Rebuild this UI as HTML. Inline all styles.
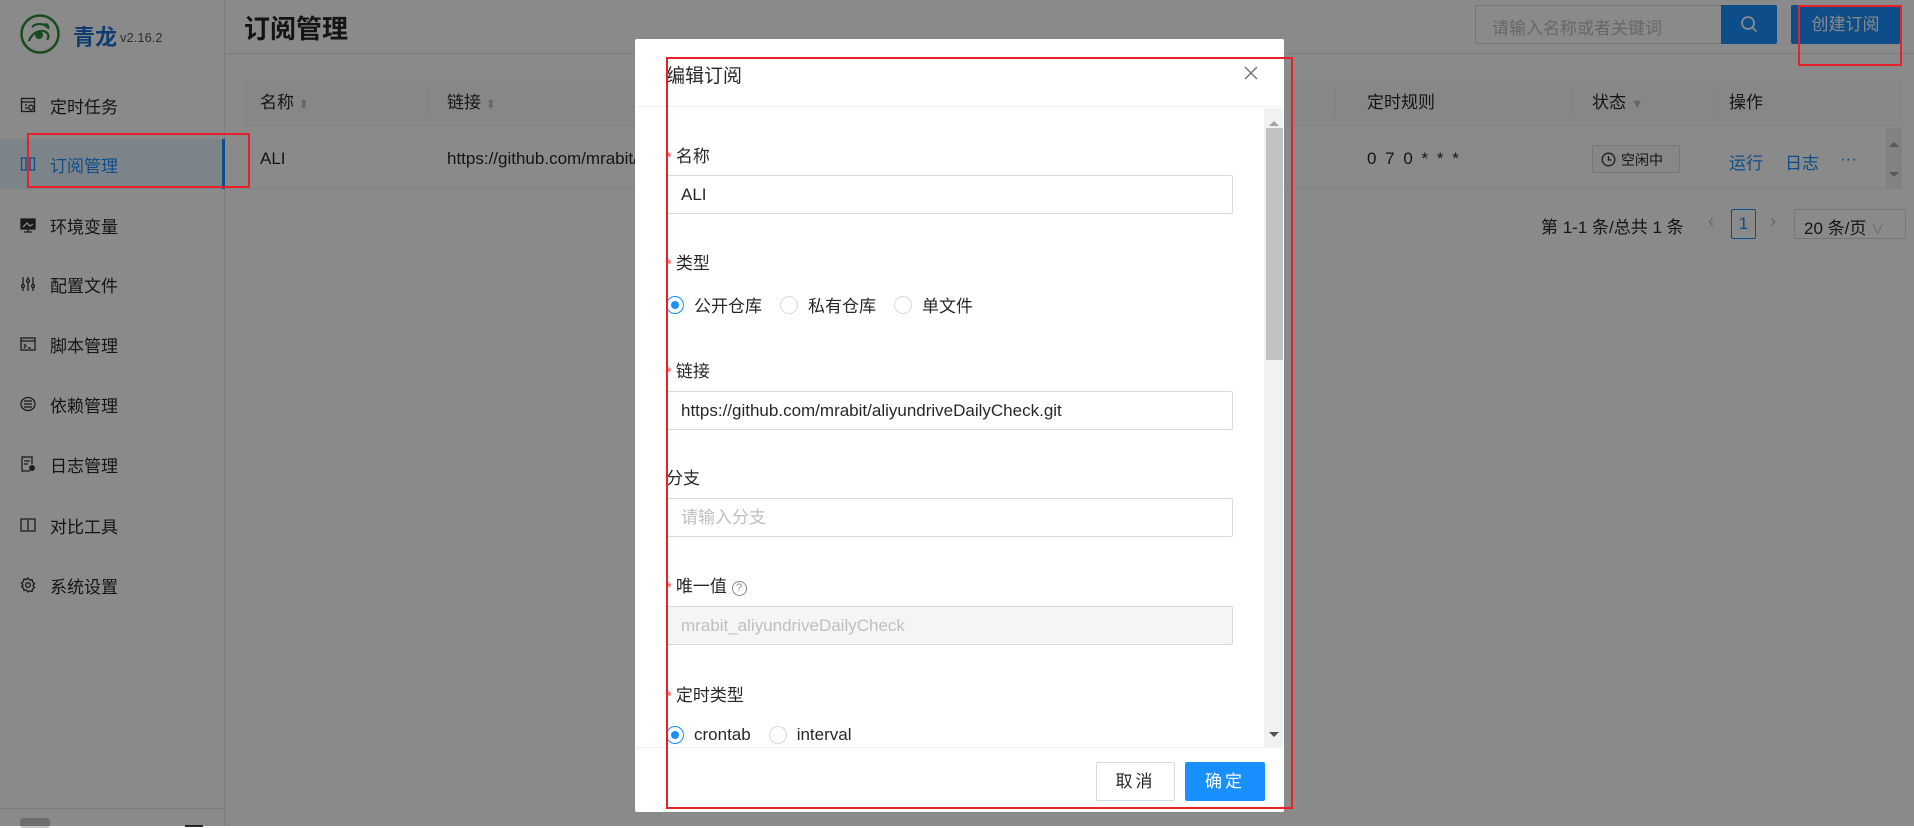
<!DOCTYPE html>
<html><head><meta charset="utf-8"><style>
*{box-sizing:border-box;margin:0;padding:0}
body{width:1914px;height:826px;overflow:hidden;position:relative;background:#fff;font-family:"Liberation Sans","Noto Sans CJK SC",sans-serif;color:rgba(0,0,0,.85)}
.abs{position:absolute}
.side{left:0;top:0;width:225px;height:826px;background:#fff;border-right:1px solid #e8e8e8}
.item{position:absolute;left:0;width:225px;height:50px;display:flex;align-items:center;padding-left:20px;font-size:17px;color:rgba(0,0,0,.85)}
.item svg{width:16px;height:16px;margin-right:14px}
.sel{background:#e6f4ff;color:#1890ff;border-right:3px solid #1890ff}
.th{font-size:17px;top:88px}
.lbl{position:absolute;left:666px;font-size:17px;color:rgba(0,0,0,.85)}
.lbl b{color:#ff4d4f;font-weight:normal;margin-right:4px;font-size:15px}
.inp{position:absolute;left:666px;width:567px;height:39px;border:1px solid #d9d9d9;border-radius:2px;font-size:17px;padding-left:14px;line-height:37px}
.radio{display:inline-block;width:18px;height:18px;border:1px solid #d9d9d9;border-radius:50%;vertical-align:middle;margin-right:10px;position:relative}
.radio.on{border-color:#1890ff}
.radio.on:after{content:"";position:absolute;left:4px;top:4px;width:8px;height:8px;border-radius:50%;background:#1890ff}
.rg{position:absolute;left:666px;font-size:17px}
.rg span.t{margin-right:18px;vertical-align:middle}
.red{position:absolute;border:2px solid #e8202a}
</style></head><body>
<div class="abs side">
 <svg class="abs" style="left:20px;top:14px" width="40" height="40" viewBox="0 0 40 40"><circle cx="20" cy="20" r="18.5" fill="#fff" stroke="#2e8b3a" stroke-width="2.5"/><path d="M9 27c2-6 7-10 13-10s8 5 5 9M12 13c4-4 11-4 15 0M24 11c3-2 5 1 4 4" stroke="#2e8b3a" stroke-width="2.2" fill="none"/><circle cx="19" cy="21" r="4" fill="#2e8b3a"/></svg>
 <div class="abs" style="left:73px;top:20px;font-size:22px;font-weight:bold;color:#1b6fd0">青龙</div>
 <div class="abs" style="left:120px;top:30px;font-size:13px;color:#555">v2.16.2</div>
 <div class="item" style="top:80px"><svg viewBox="0 0 16 16" fill="none" stroke="#333" stroke-width="1.3"><rect x="1.5" y="1.5" width="13" height="13"/><path d="M1.5 5h13M5 8h2M5 11h3"/><circle cx="11" cy="10.5" r="2.3"/></svg>定时任务</div>
 <div class="item sel" style="top:139px"><svg viewBox="0 0 16 16" fill="none" stroke="#1890ff" stroke-width="1.3"><rect x="1.5" y="2" width="13" height="12"/><path d="M6 2v12M10 2v12"/></svg>订阅管理</div>
 <div class="item" style="top:200px"><svg viewBox="0 0 16 16" fill="none" stroke="#333" stroke-width="1.3"><rect x="1" y="2" width="14" height="10" fill="#333"/><path d="M4 15h8M8 12v3"/><path d="M3 10l4-4 3 3 3-2" stroke="#fff"/></svg>环境变量</div>
 <div class="item" style="top:259px"><svg viewBox="0 0 16 16" fill="none" stroke="#333" stroke-width="1.3"><path d="M3 1v14M8 1v14M13 1v14"/><circle cx="3" cy="10" r="1.5" fill="#fff"/><circle cx="8" cy="5" r="1.5" fill="#fff"/><circle cx="13" cy="10" r="1.5" fill="#fff"/></svg>配置文件</div>
 <div class="item" style="top:319px"><svg viewBox="0 0 16 16" fill="none" stroke="#333" stroke-width="1.3"><rect x="1" y="2" width="14" height="12"/><path d="M1 5h14M4 8l2 2-2 2M8 12h3"/></svg>脚本管理</div>
 <div class="item" style="top:379px"><svg viewBox="0 0 16 16" fill="none" stroke="#333" stroke-width="1.3"><ellipse cx="8" cy="8" rx="7" ry="6.5"/><path d="M4 5h8M4 8h8M4 11h8"/></svg>依赖管理</div>
 <div class="item" style="top:439px"><svg viewBox="0 0 16 16" fill="none" stroke="#333" stroke-width="1.3"><path d="M10 15H2V1h10v7"/><path d="M4 5h6M4 8h4"/><circle cx="12" cy="12" r="2.3" fill="#333"/></svg>日志管理</div>
 <div class="item" style="top:500px"><svg viewBox="0 0 16 16" fill="none" stroke="#333" stroke-width="1.3"><path d="M7 2H1v12h6M9 2h6v12H9"/><path d="M8 1v14"/></svg>对比工具</div>
 <div class="item" style="top:560px"><svg viewBox="0 0 16 16" fill="none" stroke="#333" stroke-width="1.3"><path d="M8 1l1.5 2 2.5-.5.5 2.5 2 1.5-1.5 2 1.5 2-2 1.5-.5 2.5-2.5-.5L8 15l-1.5-2-2.5.5-.5-2.5-2-1.5L3 8 1.5 6l2-1.5.5-2.5 2.5.5z"/><circle cx="8" cy="8" r="2.3"/></svg>系统设置</div>
 <div class="abs" style="left:0;top:808px;width:225px;border-top:1px solid #e8e8e8"></div>
 <div class="abs" style="left:20px;top:818px;width:30px;height:10px;background:#ccc;border-radius:3px"></div>
 <div class="abs" style="left:185px;top:825px;width:18px;height:2px;background:#333"></div>
</div>
<div class="abs" style="left:225px;top:0;width:1689px;height:54px;border-bottom:1px solid #e8e8e8"></div>
<div class="abs" style="left:244px;top:9px;font-size:26px;font-weight:bold">订阅管理</div>
<div class="abs" style="left:1475px;top:5px;width:247px;height:39px;border:1px solid #d9d9d9;border-radius:2px 0 0 2px;font-size:17px;color:#bfbfbf;padding:8px 0 0 16px">请输入名称或者关键词</div>
<div class="abs" style="left:1721px;top:5px;width:56px;height:39px;background:#1890ff;border-radius:0 2px 2px 0"><svg width="56" height="39"><circle cx="27" cy="18" r="6" stroke="#fff" stroke-width="1.8" fill="none"/><path d="M31.5 22.5l4 4" stroke="#fff" stroke-width="1.8"/></svg></div>
<div class="abs" style="left:1791px;top:5px;width:109px;height:39px;background:#1890ff;border-radius:2px;color:#fff;font-size:17px;text-align:center;line-height:39px">创建订阅</div>
<div class="abs" style="left:245px;top:80px;width:1658px;height:47px;background:#fafafa;border-bottom:1px solid #f0f0f0"></div>
<div class="abs th" style="left:260px">名称 <span style="color:#bbb;font-size:12px">⬍</span></div>
<div class="abs" style="left:428px;top:88px;height:30px;border-left:1px solid #eee"></div>
<div class="abs th" style="left:447px">链接 <span style="color:#bbb;font-size:12px">⬍</span></div>
<div class="abs" style="left:1335px;top:88px;height:30px;border-left:1px solid #eee"></div>
<div class="abs th" style="left:1367px">定时规则</div>
<div class="abs" style="left:1572px;top:88px;height:30px;border-left:1px solid #eee"></div>
<div class="abs th" style="left:1592px">状态 <span style="color:#bbb;font-size:13px">▼</span></div>
<div class="abs" style="left:1714px;top:88px;height:30px;border-left:1px solid #eee"></div>
<div class="abs th" style="left:1729px">操作</div>
<div class="abs" style="left:245px;top:188px;width:1658px;border-top:1px solid #f0f0f0"></div>
<div class="abs" style="left:260px;top:149px;font-size:17px">ALI</div>
<div class="abs" style="left:447px;top:149px;font-size:17px">https://github.com/mrabit/aliyundriveDailyCheck.git</div>
<div class="abs" style="left:1367px;top:149px;font-size:17px;letter-spacing:2px">0 7 0 * * *</div>
<div class="abs" style="left:1592px;top:145px;width:88px;height:28px;border:1px solid #d9d9d9;border-radius:2px;font-size:14px;padding:4px 0 0 28px;background:#fafafa">空闲中<svg class="abs" style="left:8px;top:6px" width="15" height="15"><circle cx="7.5" cy="7.5" r="6.3" stroke="#333" stroke-width="1.3" fill="none"/><path d="M7.5 4v4h3" stroke="#333" stroke-width="1.3" fill="none"/></svg></div>
<div class="abs" style="left:1729px;top:149px;font-size:17px;color:#1890ff">运行</div>
<div class="abs" style="left:1785px;top:149px;font-size:17px;color:#1890ff">日志</div>
<div class="abs" style="left:1840px;top:149px;font-size:17px;color:#1890ff">···</div>
<div class="abs" style="left:1886px;top:128px;width:16px;height:60px;background:#f1f1f1"></div>
<div class="abs" style="left:1889px;top:137px;border:5px solid transparent;border-bottom-color:#a3a3a3"></div>
<div class="abs" style="left:1889px;top:172px;border:5px solid transparent;border-top-color:#a3a3a3"></div>
<div class="abs" style="left:1541px;top:213px;font-size:17px;white-space:nowrap">第 1-1 条/总共 1 条</div>
<div class="abs" style="left:1708px;top:211px;color:#bbb;font-size:18px">‹</div>
<div class="abs" style="left:1731px;top:209px;width:25px;height:30px;border:1px solid #1890ff;border-radius:2px;color:#1890ff;text-align:center;line-height:28px;font-size:17px">1</div>
<div class="abs" style="left:1770px;top:211px;color:#bbb;font-size:18px">›</div>
<div class="abs" style="left:1794px;top:209px;width:112px;height:30px;border:1px solid #d9d9d9;border-radius:2px;font-size:17px;padding:4px 0 0 9px;white-space:nowrap">20 条/页 <span style="color:#bbb;font-size:13px">∨</span></div>
<div class="abs" style="left:0;top:0;width:1914px;height:826px;background:rgba(0,0,0,.46)"></div>
<div class="red" style="left:27px;top:133px;width:223px;height:55px"></div>
<div class="red" style="left:1798px;top:5px;width:104px;height:61px"></div>
<div class="abs" style="left:635px;top:39px;width:649px;height:773px;background:#fff;border-radius:2px;overflow:hidden">
 <div class="abs" style="left:0;top:0;width:649px;height:68px;border-bottom:1px solid #f0f0f0"></div>
 <div class="abs" style="left:31px;top:22px;font-size:19px">编辑订阅</div>
 <svg class="abs" style="left:608px;top:26px" width="16" height="16"><path d="M2 2l12 12M14 2L2 14" stroke="#777" stroke-width="1.5"/></svg>
 <div class="abs" style="left:629px;top:69px;width:19px;height:639px;background:#f1f1f1"></div>
 <div class="abs" style="left:631px;top:89px;width:17px;height:232px;background:#c1c1c1"></div>
 <div class="abs" style="left:634px;top:77px;width:0;height:0;border:5px solid transparent;border-bottom-color:#a3a3a3"></div>
 <div class="abs" style="left:634px;top:693px;width:0;height:0;border:5px solid transparent;border-top-color:#505050"></div>
 <div class="abs" style="left:0;top:708px;width:649px;border-top:1px solid #f0f0f0"></div>
 <div class="abs" style="left:461px;top:723px;width:79px;height:39px;border:1px solid #d9d9d9;border-radius:2px;text-align:center;line-height:37px;font-size:17px;letter-spacing:3px">取消</div>
 <div class="abs" style="left:550px;top:723px;width:80px;height:39px;background:#1890ff;border-radius:2px;text-align:center;line-height:39px;font-size:17px;color:#fff;letter-spacing:3px">确定</div>
</div>
<div class="lbl" style="top:142px"><b>*</b>名称</div>
<div class="inp" style="top:175px">ALI</div>
<div class="lbl" style="top:249px"><b>*</b>类型</div>
<div class="rg" style="top:292px"><span class="radio on"></span><span class="t">公开仓库</span><span class="radio"></span><span class="t">私有仓库</span><span class="radio"></span><span class="t">单文件</span></div>
<div class="lbl" style="top:357px"><b>*</b>链接</div>
<div class="inp" style="top:391px">https://github.com/mrabit/aliyundriveDailyCheck.git</div>
<div class="lbl" style="top:464px">分支</div>
<div class="inp" style="top:498px;color:#bfbfbf">请输入分支</div>
<div class="lbl" style="top:572px"><b>*</b>唯一值 <span style="display:inline-block;width:15px;height:15px;border:1px solid #888;border-radius:50%;font-size:11px;text-align:center;line-height:13px;color:#888;vertical-align:1px">?</span></div>
<div class="inp" style="top:606px;background:#f5f5f5;color:#bfbfbf">mrabit_aliyundriveDailyCheck</div>
<div class="lbl" style="top:681px"><b>*</b>定时类型</div>
<div class="rg" style="top:724px"><span class="radio on"></span><span class="t">crontab</span><span class="radio"></span><span class="t">interval</span></div>
<div class="red" style="left:666px;top:57px;width:627px;height:752px"></div>
</body></html>
